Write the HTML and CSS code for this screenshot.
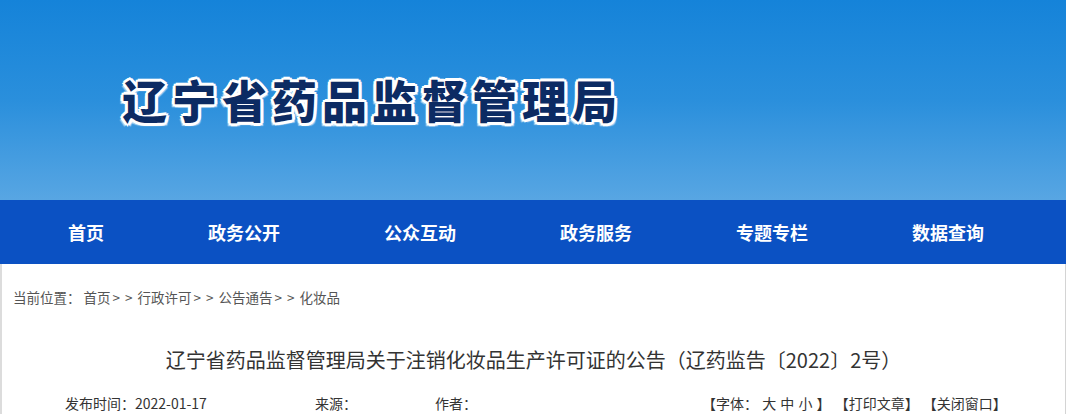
FILE: index.html
```html
<!DOCTYPE html>
<html lang="zh-CN">
<head>
    <meta charset="UTF-8">
    <title>辽宁省药品监督管理局</title>
    <link rel="stylesheet" href="styles.css">
</head>
<body>
    <div class="banner">
        <h1 class="site-name">辽宁省药品监督管理局</h1>
    </div>
    <div class="nav">
        <a href="#">首页</a>
        <a href="#">政务公开</a>
        <a href="#">公众互动</a>
        <a href="#">政务服务</a>
        <a href="#">专题专栏</a>
        <a href="#">数据查询</a>
    </div>
    <div class="content">
        <div class="crumb">
            当前位置： <a href="#">首页</a><span class="sep">&gt;&gt;</span><a href="#">行政许可</a><span class="sep">&gt;&gt;</span><a href="#">公告通告</a><span class="sep">&gt;&gt;</span><a href="#">化妆品</a>
        </div>
        <h2 class="article-title">辽宁省药品监督管理局关于注销化妆品生产许可证的公告（辽药监告〔2022〕2号）</h2>
        <div class="meta">
            <span class="pub">发布时间：2022-01-17</span>
            <span class="source">来源：</span>
            <span class="author">作者：</span>
            <span class="tools">【字体： <a href="#">大</a> <a href="#">中</a> <a href="#">小</a> 】 【<a href="#">打印文章</a>】 【<a href="#">关闭窗口</a>】</span>
        </div>
    </div>
</body>
</html>
```

FILE: styles.css
```css
body {
    margin: 0;
    font-family: "Noto Sans CJK SC", "Liberation Sans", sans-serif;
    color: #333;
    background: #fff;
}
a {
    color: inherit;
    text-decoration: none;
}
.banner {
    height: 200px;
    background: linear-gradient(to bottom, #1583d9 0%, #2a8fdc 50%, #58a6e3 100%);
    padding-top: 72px;
    padding-left: 122px;
    box-sizing: border-box;
}
.site-name {
    margin: 0;
    font-size: 45px;
    line-height: 56px;
    font-weight: 900;
    letter-spacing: 5px;
    color: #0c2b63;
    text-shadow:
        3px 0 0 #fff, -3px 0 0 #fff, 0 3px 0 #fff, 0 -3px 0 #fff,
        2px 2px 0 #fff, -2px 2px 0 #fff, 2px -2px 0 #fff, -2px -2px 0 #fff,
        3px 3px 1px rgba(255,255,255,0.6), -3px 3px 1px rgba(255,255,255,0.6);
}
.nav {
    height: 64px;
    background: #0b51c3;
    display: flex;
    gap: 104px;
    padding-left: 68px;
}
.nav a {
    color: #fff;
    font-size: 18px;
    font-weight: 700;
    line-height: 64px;
}
.content {
    border-left: 2px solid #dcdcdc;
    border-right: 1px solid #d4d4d4;
    height: 150px;
}
.crumb {
    font-size: 13.5px;
    color: #555;
    padding: 24px 0 0 11px;
    height: 42px;
    line-height: 18px;
}
.sep {
    letter-spacing: 5px;
    padding-left: 2px;
}
.article-title {
    margin: 0;
    font-size: 20px;
    font-weight: normal;
    color: #333;
    text-align: center;
    line-height: 28px;
    padding: 16px 0 0;
    height: 47px;
}
.meta {
    display: flex;
    font-size: 14px;
    line-height: 20px;
    color: #333;
}
.pub {
    margin-left: 63px;
    width: 250px;
}
.source {
    width: 120px;
}
.author {
    width: 267px;
}
.tools {
    font-size: 14px;
    word-spacing: 1px;
}
```
